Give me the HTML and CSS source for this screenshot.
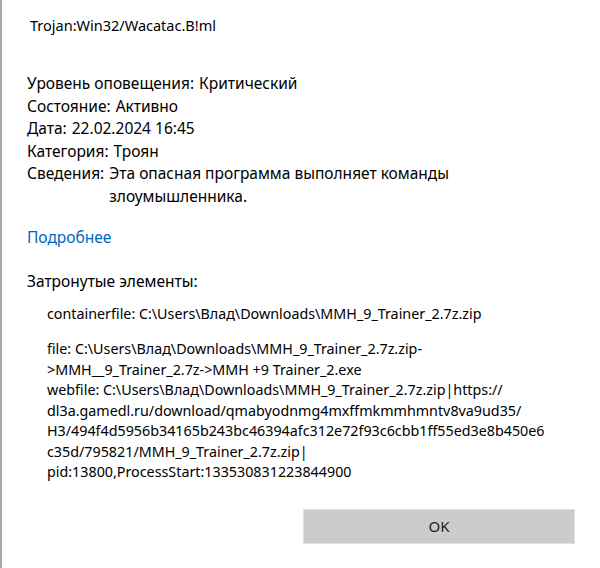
FILE: index.html
```html
<!DOCTYPE html>
<html lang="ru">
<head>
    <meta charset="UTF-8">
    <title>Threat details</title>
    <link rel="stylesheet" href="styles.css">
</head>
<body>
    <div class="dialog">
        <div class="threat-name">Trojan:Win32/Wacatac.B!ml</div>

        <div class="details">
            <div class="row"><span class="label">Уровень оповещения:</span><span class="value">Критический</span></div>
            <div class="row"><span class="label">Состояние:</span><span class="value">Активно</span></div>
            <div class="row"><span class="label">Дата:</span><span class="value">22.02.2024 16:45</span></div>
            <div class="row"><span class="label">Категория:</span><span class="value">Троян</span></div>
            <div class="row"><span class="label">Сведения:</span><span class="value">Эта опасная программа выполняет команды<br>злоумышленника.</span></div>
        </div>

        <a class="more" href="#">Подробнее</a>

        <div class="affected-title">Затронутые элементы:</div>
        <div class="affected">
            <p>containerfile: C:\Users\Влад\Downloads\MMH_9_Trainer_2.7z.zip</p>
            <p>file: C:\Users\Влад\Downloads\MMH_9_Trainer_2.7z.zip-<br>&gt;MMH__9_Trainer_2.7z-&gt;MMH +9 Trainer_2.exe<br>webfile: C:\Users\Влад\Downloads\MMH_9_Trainer_2.7z.zip|https://<br>dl3a.gamedl.ru/download/qmabyodnmg4mxffmkmmhmntv8va9ud35/<br>H3/494f4d5956b34165b243bc46394afc312e72f93c6cbb1ff55ed3e8b450e6<br>c35d/795821/MMH_9_Trainer_2.7z.zip|<br>pid:13800,ProcessStart:133530831223844900</p>
        </div>

        <div class="actions">
            <button class="btn">OK</button>
        </div>
    </div>
</body>
</html>
```

FILE: styles.css
```css
html, body {
    height: 100%;
}
body {
    margin: 0;
    background: white;
    color: rgb(0, 0, 0);
    font-family: 'Noto Sans', 'Open Sans', sans-serif;
    font-size: 15.5px;
}
.dialog {
    box-sizing: border-box;
    height: 100%;
    border-left: 2px solid rgb(170, 170, 170);
    padding: 14px 25px 0 25px;
}
.threat-name {
    margin-left: 3px;
    font-size: 14.5px;
    line-height: 22px;
    margin-bottom: 36px;
}
.details {
    line-height: 22.6px;
}
.row {
    display: flex;
    gap: 5px;
}
.more {
    display: block;
    margin-top: 18px;
    line-height: 22px;
    color: rgb(0, 103, 192);
    text-decoration: none;
}
.affected-title {
    margin-top: 22px;
    line-height: 22px;
}
.affected {
    padding-left: 20px;
    font-size: 14.3px;
    line-height: 20.5px;
}
.affected p {
    margin: 12px 0 0 0;
}
.affected p + p {
    margin-top: 15px;
}
.actions {
    display: flex;
    justify-content: flex-end;
    margin-top: 26px;
}
.btn {
    width: 272px;
    height: 35px;
    background-color: rgb(204, 204, 204);
    border: 1px solid rgb(225, 225, 225);
    font-family: inherit;
    font-size: 15px;
    color: rgb(30, 30, 30);
}
```
